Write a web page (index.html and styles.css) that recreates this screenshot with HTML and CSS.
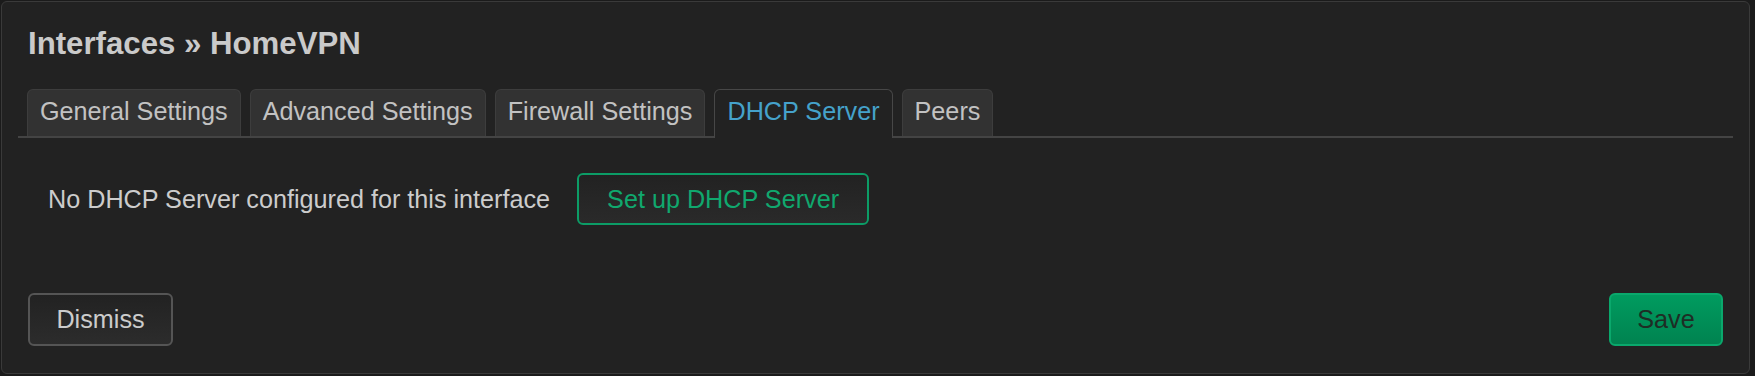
FILE: index.html
```html
<!DOCTYPE html>
<html lang="en">
<head>
<meta charset="utf-8">
<title>Interfaces » HomeVPN</title>
<link rel="stylesheet" href="styles.css">
</head>
<body>
<div class="modal">
  <h4 class="modal-title">Interfaces » HomeVPN</h4>
  <ul class="tabs">
    <li class="tab">General Settings</li>
    <li class="tab">Advanced Settings</li>
    <li class="tab">Firewall Settings</li>
    <li class="tab active">DHCP Server</li>
    <li class="tab">Peers</li>
  </ul>
  <div class="section">
    <p class="section-text">No DHCP Server configured for this interface</p>
    <button class="btn btn-outline-green">Set up DHCP Server</button>
  </div>
  <div class="footer">
    <button class="btn btn-neutral">Dismiss</button>
    <button class="btn btn-save">Save</button>
  </div>
</div>
</body>
</html>
```
FILE: styles.css
```css
html, body {
  margin: 0;
  padding: 0;
  background: #1b1b1b;
  height: 100%;
}

body {
  font-family: "Liberation Sans", Arial, sans-serif;
  color: #cccccc;
  overflow: hidden;
}

.modal {
  box-sizing: border-box;
  margin: 1px 5px 0 1px;
  height: 373px;
  background: #222222;
  border: 1px solid #3a3a3a;
  border-radius: 6px;
  padding: 23px 26px 25px 26px;
}

.modal-title {
  margin: 0 0 27px 0;
  font-size: 31.2px;
  line-height: 37px;
  font-weight: bold;
  color: #cacaca;
}

.tabs {
  list-style: none;
  margin: 0 -10px;
  padding: 0 0 0 9px;
  display: flex;
  align-items: flex-end;
  gap: 9px;
  border-bottom: 2px solid #444444;
  height: 47px;
}

.tab {
  box-sizing: border-box;
  height: 47px;
  padding: 6px 12px 0 12px;
  font-size: 25.2px;
  line-height: 31px;
  color: #c2c2c2;
  background: #323232;
  border: 1px solid #3d3d3d;
  border-bottom: none;
  border-radius: 6px 6px 0 0;
  white-space: nowrap;
}

.tab.active {
  height: 49px;
  margin-bottom: -2px;
  background: #222222;
  border-color: #474747;
  color: #45a2cb;
}

.section {
  display: flex;
  align-items: center;
  gap: 27px;
  padding: 35px 0 0 20px;
}

.section-text {
  margin: 0;
  font-size: 25.2px;
  line-height: 31px;
  color: #cccccc;
}

.btn {
  box-sizing: border-box;
  font-family: "Liberation Sans", Arial, sans-serif;
  font-size: 25.2px;
  line-height: 31px;
  border-radius: 6px;
  cursor: pointer;
}

.btn-outline-green {
  height: 52px;
  padding: 0 28px;
  color: #10a86e;
  background: linear-gradient(#222222, #2a2a2a);
  border: 2px solid #0c9c66;
}

.footer {
  display: flex;
  justify-content: space-between;
  margin-top: 68px;
}

.btn-neutral {
  height: 53px;
  width: 145px;
  color: #cccccc;
  background: linear-gradient(#222222, #2c2c2c);
  border: 2px solid #555555;
}

.btn-save {
  height: 53px;
  width: 114px;
  color: #1e2d25;
  background: linear-gradient(#009b5f, #008350);
  border: 2px solid #0aa86c;
}
```
